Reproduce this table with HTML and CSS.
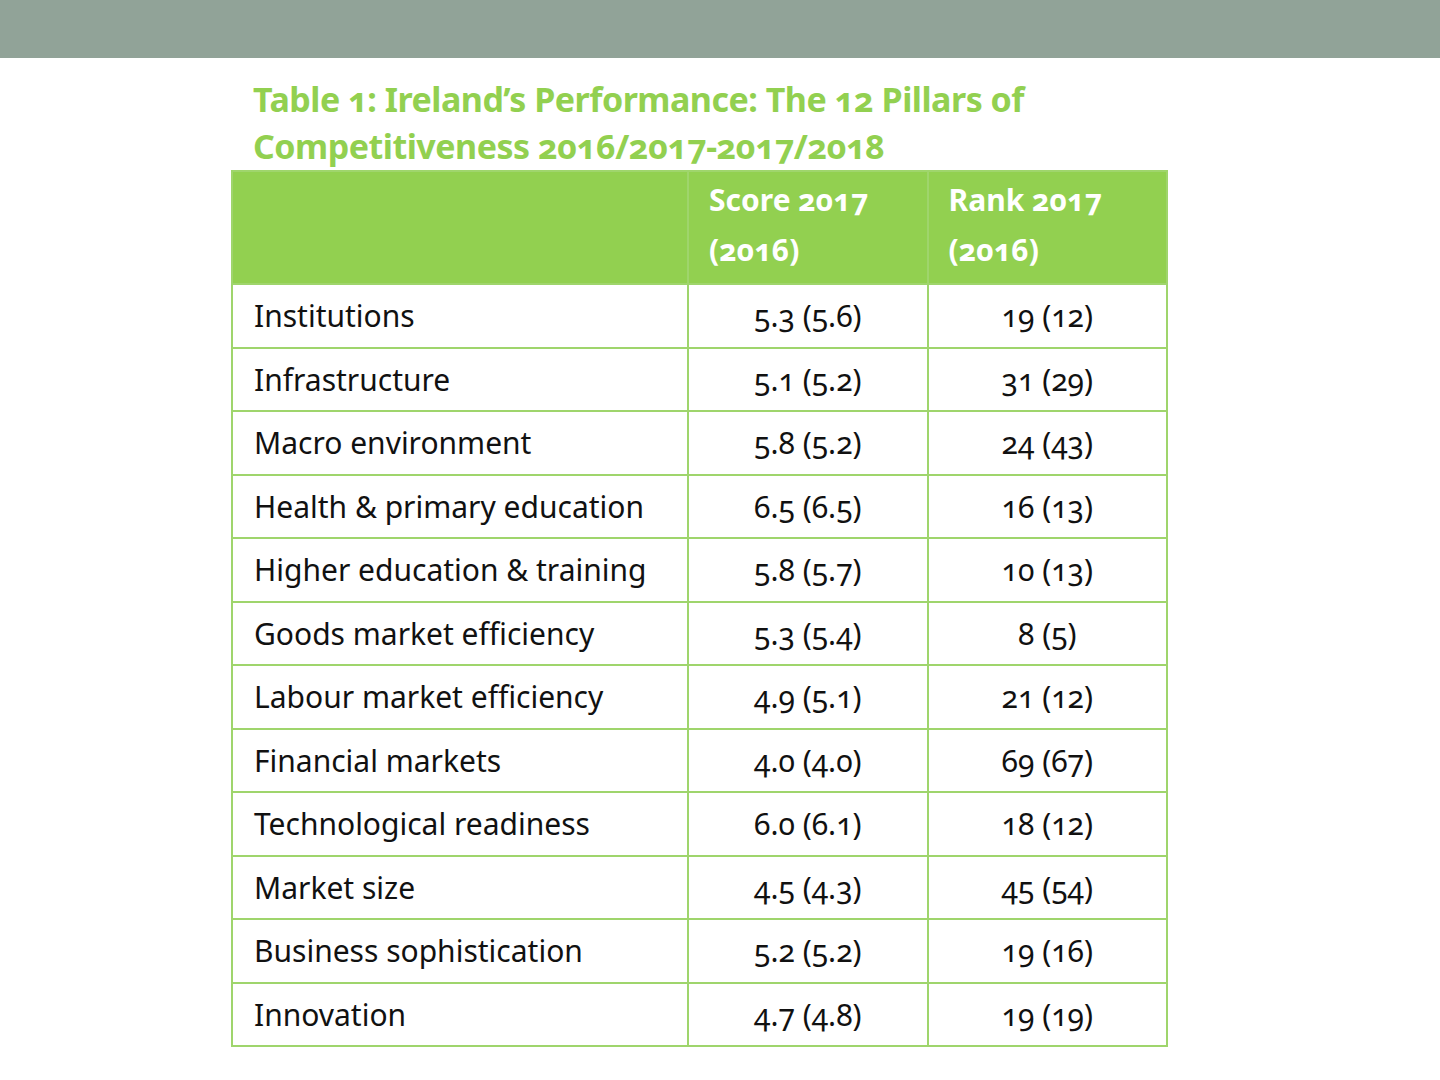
FILE: index.html
```html
<!DOCTYPE html>
<html lang="en">
<head>
<meta charset="utf-8">
<title>Table 1: Ireland's Performance</title>
<link rel="stylesheet" href="styles.css">
</head>
<body>
<div class="topbar"></div>
<main class="content">
  <h1 class="title">Table 1: Ireland’s Performance: The 12 Pillars of<br>Competitiveness 2016/2017-2017/2018</h1>
  <table class="pillars">
    <thead>
      <tr><th class="c-name"></th><th class="c-num">Score 2017<br>(2016)</th><th class="c-num">Rank 2017<br>(2016)</th></tr>
    </thead>
    <tbody>
      <tr><td class="name">Institutions</td><td class="val">5.3 (5.6)</td><td class="val">19 (12)</td></tr>
      <tr><td class="name">Infrastructure</td><td class="val">5.1 (5.2)</td><td class="val">31 (29)</td></tr>
      <tr><td class="name">Macro environment</td><td class="val">5.8 (5.2)</td><td class="val">24 (43)</td></tr>
      <tr><td class="name">Health &amp; primary education</td><td class="val">6.5 (6.5)</td><td class="val">16 (13)</td></tr>
      <tr><td class="name">Higher education &amp; training</td><td class="val">5.8 (5.7)</td><td class="val">10 (13)</td></tr>
      <tr><td class="name">Goods market efficiency</td><td class="val">5.3 (5.4)</td><td class="val">8 (5)</td></tr>
      <tr><td class="name">Labour market efficiency</td><td class="val">4.9 (5.1)</td><td class="val">21 (12)</td></tr>
      <tr><td class="name">Financial markets</td><td class="val">4.0 (4.0)</td><td class="val">69 (67)</td></tr>
      <tr><td class="name">Technological readiness</td><td class="val">6.0 (6.1)</td><td class="val">18 (12)</td></tr>
      <tr><td class="name">Market size</td><td class="val">4.5 (4.3)</td><td class="val">45 (54)</td></tr>
      <tr><td class="name">Business sophistication</td><td class="val">5.2 (5.2)</td><td class="val">19 (16)</td></tr>
      <tr><td class="name">Innovation</td><td class="val">4.7 (4.8)</td><td class="val">19 (19)</td></tr>
    </tbody>
  </table>
</main>
</body>
</html>
```
FILE: styles.css
```css
html, body {
  margin: 0;
  padding: 0;
  background: #ffffff;
}
body {
  font-family: "Noto Sans", "Open Sans", "Liberation Sans", sans-serif;
  font-feature-settings: "onum" 1;
  font-variant-numeric: oldstyle-nums;
  color: #111111;
}
.topbar {
  height: 58px;
  background: #91a398;
}
.content {
  padding: 18px 0 0 231px;
}
.title {
  margin: 0 0 0 22px;
  font-size: 34px;
  line-height: 47px;
  font-weight: 700;
  color: #92d050;
  letter-spacing: -0.5px;
}
.pillars {
  border-collapse: collapse;
  width: 937px;
}
.pillars th,
.pillars td {
  border: 2px solid #9fd56c;
  padding: 0;
}
.pillars thead th {
  background: #92d050;
  color: #ffffff;
  font-weight: 700;
  font-size: 30px;
  line-height: 50px;
  height: 108px;
  text-align: left;
  padding: 3px 0 0 20px;
  vertical-align: top;
}
.pillars .c-name { width: 437px; }
.pillars .c-num { width: 219px; }
.pillars tbody td {
  height: 61.5px;
  font-size: 30px;
  vertical-align: middle;
}
.pillars td.name {
  padding-left: 21px;
}
.pillars td.val {
  text-align: center;
}
```
